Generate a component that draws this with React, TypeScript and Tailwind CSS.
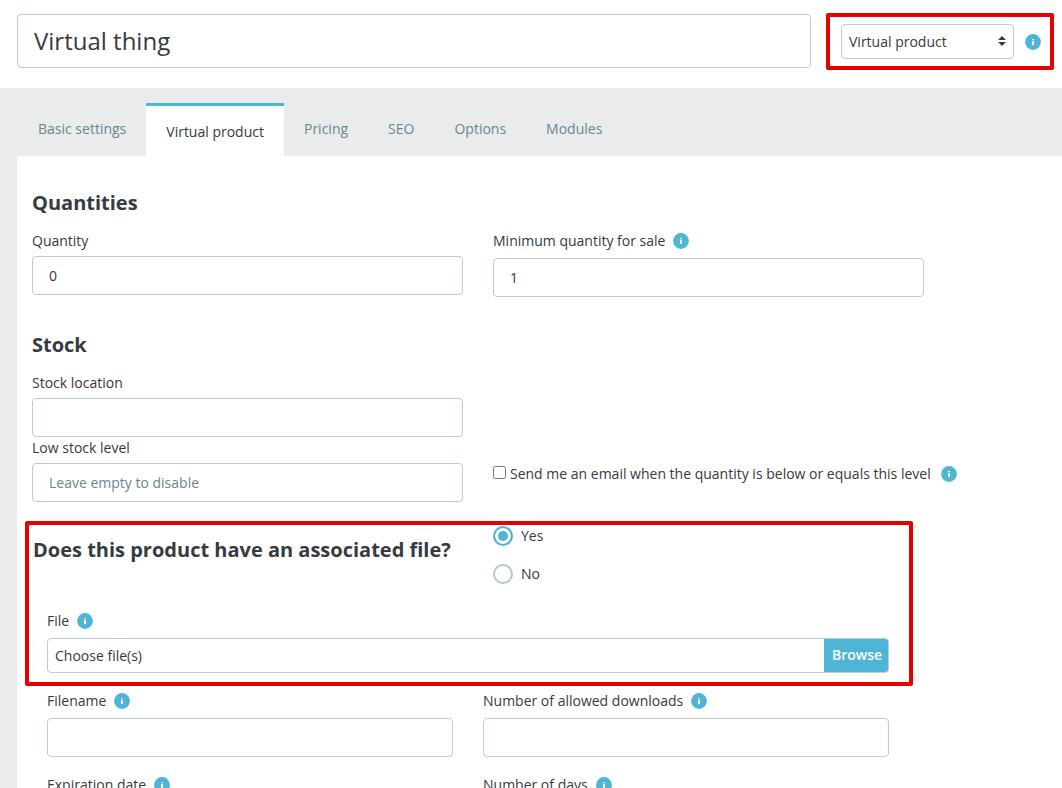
import { useRef, useState, type ReactNode } from "react";

function InfoIcon() {
  return (
    <svg
      viewBox="0 0 16 16"
      className="size-4 shrink-0"
      role="img"
      aria-label="Help"
    >
      <circle cx="8" cy="8" r="7.9" fill="#4fb5d6" />
      <rect x="7" y="5" width="2" height="1.2" fill="#fff" />
      <rect x="7" y="7.2" width="2" height="3.8" fill="#fff" />
    </svg>
  );
}

const controlClass =
  "block h-[39px] w-full rounded-[4px] border border-[#bbcdd2] bg-white px-4 text-sm text-[#363a41] outline-none placeholder:text-[#6c868e] focus:border-[#4fb5d6]";

function FieldLabel({
  htmlFor,
  info = false,
  children,
}: {
  htmlFor: string;
  info?: boolean;
  children: ReactNode;
}) {
  if (!info) {
    return (
      <label htmlFor={htmlFor} className="mb-[6px] block leading-[19px]">
        {children}
      </label>
    );
  }
  return (
    <div className="mb-1 flex h-[23px] items-start gap-2">
      <label htmlFor={htmlFor} className="leading-[19px]">
        {children}
      </label>
      <span className="pt-[2px]">
        <InfoIcon />
      </span>
    </div>
  );
}

function TextField({
  id,
  label,
  info,
  defaultValue,
  placeholder,
}: {
  id: string;
  label: string;
  info?: boolean;
  defaultValue?: string;
  placeholder?: string;
}) {
  return (
    <div>
      <FieldLabel htmlFor={id} info={info}>
        {label}
      </FieldLabel>
      <input
        id={id}
        type="text"
        defaultValue={defaultValue}
        placeholder={placeholder}
        className={controlClass}
      />
    </div>
  );
}

function SectionTitle({ children }: { children: ReactNode }) {
  return <h2 className="text-xl leading-6 font-bold">{children}</h2>;
}

function Radio({
  label,
  checked,
  onChange,
}: {
  label: string;
  checked: boolean;
  onChange: () => void;
}) {
  return (
    <label className="flex items-center gap-2 leading-5">
      <input
        type="radio"
        name="associated-file"
        checked={checked}
        onChange={onChange}
        className="size-5 appearance-none rounded-full border-2 border-[#b3c7cd] bg-white checked:border-[#4fb5d6] checked:bg-[#4fb5d6] checked:shadow-[inset_0_0_0_3px_#fff]"
      />
      {label}
    </label>
  );
}

const tabs = [
  "Basic settings",
  "Virtual product",
  "Pricing",
  "SEO",
  "Options",
  "Modules",
];

function Tabs() {
  const [active, setActive] = useState("Virtual product");
  return (
    <nav role="tablist" className="flex pt-[15px] pl-[18px]">
      {tabs.map((tab) => (
        <button
          key={tab}
          type="button"
          role="tab"
          aria-selected={tab === active}
          onClick={() => setActive(tab)}
          className={
            tab === active
              ? "h-[53px] border-t-[3px] border-[#4fb5d6] bg-white px-5 pt-[2px] text-[#363a41]"
              : "h-[53px] px-5 pb-[2px] text-[#6c868e]"
          }
        >
          {tab}
        </button>
      ))}
    </nav>
  );
}

function Header() {
  return (
    <header className="flex items-start gap-[15px] bg-white pt-[13px] pr-2 pb-[18px] pl-[17px]">
      <input
        type="text"
        aria-label="Product name"
        defaultValue="Virtual thing"
        className="mt-px h-[54px] min-w-0 flex-1 rounded-[4px] border border-[#bbcdd2] px-4 pb-[2px] text-2xl outline-none"
      />
      <div className="flex h-[57px] items-center gap-[11px] rounded-[2px] border-4 border-[#e60000] pr-[9px] pl-[11px]">
        <div className="relative w-[173px]">
          <select
            aria-label="Product type"
            defaultValue="virtual"
            className="block h-[35px] w-full appearance-none rounded-[4px] border border-[#bbcdd2] bg-white pl-[7px] text-sm outline-none"
          >
            <option value="standard">Standard product</option>
            <option value="pack">Pack of products</option>
            <option value="virtual">Virtual product</option>
          </select>
          <svg
            viewBox="0 0 8 10"
            className="pointer-events-none absolute top-3 right-2 h-[10px] w-2"
            aria-hidden="true"
          >
            <path d="M4 0 8 4H0zM4 10 8 6H0z" fill="#363a41" />
          </svg>
        </div>
        <InfoIcon />
      </div>
    </header>
  );
}

function FilePicker() {
  const input = useRef<HTMLInputElement>(null);
  const [name, setName] = useState("Choose file(s)");
  return (
    <div>
      <FieldLabel htmlFor="file" info>
        File
      </FieldLabel>
      <input
        ref={input}
        id="file"
        type="file"
        className="hidden"
        onChange={(e) => setName(e.target.files?.[0]?.name ?? "Choose file(s)")}
      />
      <div className="flex h-[35px] items-stretch overflow-hidden rounded-[4px] border border-[#bbcdd2]">
        <span className="flex-1 px-[7px] leading-[33px]">{name}</span>
        <button
          type="button"
          onClick={() => input.current?.click()}
          className="w-16 bg-[#4fb5d6] pb-[2px] pl-[2px] text-center font-semibold text-white"
        >
          Browse
        </button>
      </div>
    </div>
  );
}

export default function App() {
  const [hasFile, setHasFile] = useState(true);
  return (
    <div className="h-screen overflow-hidden bg-[#eaebec] font-['Open_Sans','Noto_Sans',sans-serif] text-sm text-[#363a41]">
      <Header />
      <Tabs />
      <main className="ml-[17px] bg-white pt-[35px] pb-8 pl-2">
        <section className="max-w-[906px] px-[7px]">
          <SectionTitle>Quantities</SectionTitle>
          <div className="mt-4 grid grid-cols-2 gap-x-[30px]">
            <TextField id="quantity" label="Quantity" defaultValue="0" />
            <TextField
              id="minimum"
              label="Minimum quantity for sale"
              info
              defaultValue="1"
            />
          </div>
        </section>

        <section className="mt-9 max-w-[906px] px-[7px]">
          <SectionTitle>Stock</SectionTitle>
          <div className="mt-4 grid grid-cols-2 gap-x-[30px] gap-y-px">
            <TextField id="location" label="Stock location" />
            <div className="col-start-1">
              <TextField
                id="low-stock"
                label="Low stock level"
                placeholder="Leave empty to disable"
              />
            </div>
            <div className="flex items-start self-end pb-[18px] whitespace-nowrap">
              <input
                id="alert"
                type="checkbox"
                className="mt-[3px] mr-1 size-[13px]"
              />
              <label htmlFor="alert" className="mr-[10px] leading-[21px]">
                Send me an email when the quantity is below or equals this level
              </label>
              <span className="pt-[3px]">
                <InfoIcon />
              </span>
            </div>
          </div>
        </section>

        <section className="mt-[19px] max-w-[888px] rounded-[2px] border-4 border-[#e60000] pb-[9px]">
          <div className="grid grid-cols-[minmax(0,434px)_1fr] gap-x-[30px] pt-px">
            <div className="pt-3 pl-1 whitespace-nowrap">
              <SectionTitle>
                Does this product have an associated file?
              </SectionTitle>
            </div>
            <div className="flex flex-col gap-[18px]">
              <Radio
                label="Yes"
                checked={hasFile}
                onChange={() => setHasFile(true)}
              />
              <Radio
                label="No"
                checked={!hasFile}
                onChange={() => setHasFile(false)}
              />
            </div>
          </div>
          <div className="mt-[27px] pr-5 pl-[18px]">
            <FilePicker />
          </div>
        </section>

        <section className="mt-[5px] grid max-w-[886px] grid-cols-2 gap-x-[30px] gap-y-[18px] px-[22px]">
          <TextField id="filename" label="Filename" info />
          <TextField id="downloads" label="Number of allowed downloads" info />
          <TextField id="expiration" label="Expiration date" info />
          <TextField id="days" label="Number of days" info />
        </section>
      </main>
    </div>
  );
}
